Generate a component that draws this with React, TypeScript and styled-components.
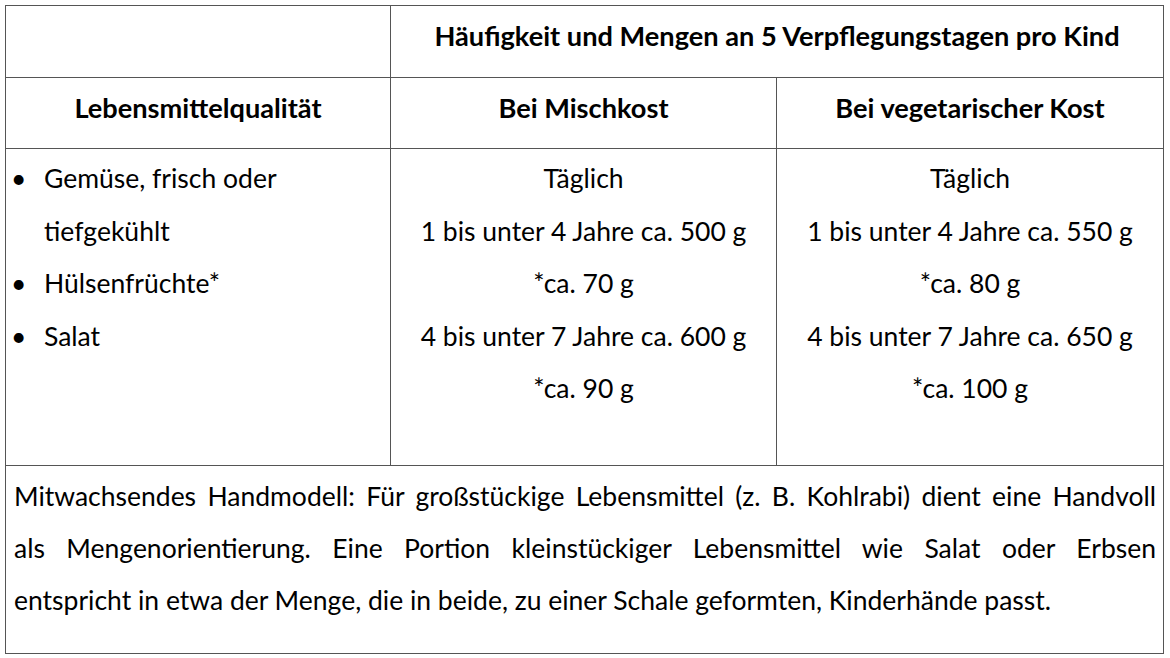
import * as React from 'react'
import styled, { createGlobalStyle } from 'styled-components'

const GlobalStyle = createGlobalStyle`
  html, body {
    margin: 0;
    padding: 0;
    background: #ffffff;
  }
  body {
    font-family: Lato, "Open Sans", sans-serif;
    color: #000000;
  }
`

const Page = styled.div`
  width: 1170px;
  height: 658px;
  padding: 5px 0 0 5px;
  box-sizing: border-box;
`

const Table = styled.table`
  border-collapse: collapse;
  table-layout: fixed;
  width: 1158px;
  font-size: 26.5px;
`

const Cell = styled.td<{ $height?: number; $align?: 'left' | 'center' | 'justify' }>`
  border: 1px solid #555555;
  height: ${(p) => (p.$height ? `${p.$height}px` : 'auto')};
  padding: 0;
  text-align: ${(p) => p.$align || 'center'};
  vertical-align: top;
  box-sizing: border-box;
`

const HeadText = styled.div`
  font-weight: 700;
  font-size: 27.2px;
  line-height: 59px;
  text-align: center;
`

const Lines = styled.div`
  padding-top: 3px;
  line-height: 52.5px;
  text-align: center;
`

const List = styled.ul`
  list-style: none;
  margin: 0;
  padding: 3px 0 0 0;
  line-height: 52.5px;
`

const Item = styled.li`
  display: grid;
  grid-template-columns: 33px 1fr;
  padding-left: 5px;

  &::before {
    content: '•';
  }
`

const Note = styled.div`
  padding: 4px 7px 0 8px;
  line-height: 52px;
`

const NoteLine = styled.div<{ $last?: boolean }>`
  text-align: ${(p) => (p.$last ? 'left' : 'justify')};
  text-align-last: ${(p) => (p.$last ? 'left' : 'justify')};
`

export default function App() {
  return (
    <Page>
      <GlobalStyle />
      <Table>
        <colgroup>
          <col style={{ width: 385 }} />
          <col style={{ width: 386 }} />
          <col style={{ width: 387 }} />
        </colgroup>
        <tbody>
          <tr>
            <Cell $height={72} />
            <Cell $height={72} colSpan={2}>
              <HeadText>Häufigkeit und Mengen an 5 Verpflegungstagen pro Kind</HeadText>
            </Cell>
          </tr>
          <tr>
            <Cell $height={71}>
              <HeadText>Lebensmittelqualität</HeadText>
            </Cell>
            <Cell $height={71}>
              <HeadText>Bei Mischkost</HeadText>
            </Cell>
            <Cell $height={71}>
              <HeadText>Bei vegetarischer Kost</HeadText>
            </Cell>
          </tr>
          <tr>
            <Cell $height={317} $align="left">
              <List>
                <Item>
                  <span>
                    Gemüse, frisch oder
                    <br />
                    tiefgekühlt
                  </span>
                </Item>
                <Item>
                  <span>Hülsenfrüchte*</span>
                </Item>
                <Item>
                  <span>Salat</span>
                </Item>
              </List>
            </Cell>
            <Cell $height={317}>
              <Lines>
                Täglich
                <br />1 bis unter 4 Jahre ca. 500 g
                <br />
                *ca. 70 g
                <br />4 bis unter 7 Jahre ca. 600 g
                <br />
                *ca. 90 g
              </Lines>
            </Cell>
            <Cell $height={317}>
              <Lines>
                Täglich
                <br />1 bis unter 4 Jahre ca. 550 g
                <br />
                *ca. 80 g
                <br />4 bis unter 7 Jahre ca. 650 g
                <br />
                *ca. 100 g
              </Lines>
            </Cell>
          </tr>
          <tr>
            <Cell $height={188} colSpan={3} $align="left">
              <Note>
                <NoteLine>
                  Mitwachsendes Handmodell: Für großstückige Lebensmittel (z. B. Kohlrabi) dient eine Handvoll
                </NoteLine>
                <NoteLine>
                  als Mengenorientierung. Eine Portion kleinstückiger Lebensmittel wie Salat oder Erbsen
                </NoteLine>
                <NoteLine $last>
                  entspricht in etwa der Menge, die in beide, zu einer Schale geformten, Kinderhände passt.
                </NoteLine>
              </Note>
            </Cell>
          </tr>
        </tbody>
      </Table>
    </Page>
  )
}
